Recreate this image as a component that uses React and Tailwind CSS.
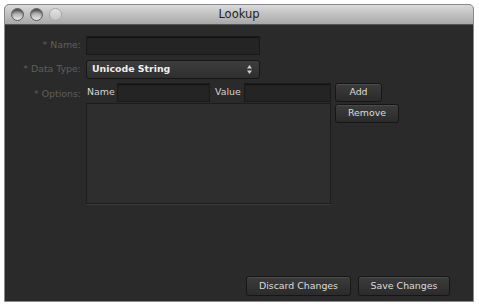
const btn =
  'flex items-center justify-center rounded-[3px] border border-[#161616] bg-gradient-to-b from-[#3c3c3c] to-[#2b2b2b] text-[9.4px] text-[#dcdcdc] shadow-[inset_0_1px_0_rgba(255,255,255,0.08)]';

const input = 'h-[19px] border border-[#1a1a1a] bg-[#242424] shadow-[inset_0_1px_1px_rgba(0,0,0,0.5)]';

function Light({ dim }) {
  return (
    <span
      className={`h-[13px] w-[13px] rounded-full border ${
        dim
          ? 'border-[#a8a8a8] bg-gradient-to-b from-[#e4e4e4] to-[#c4c4c4]'
          : 'border-[#5a5a5a] bg-gradient-to-b from-[#6e6e6e] via-[#b8b8b8] to-[#e8e8e8] shadow-[inset_0_2px_2px_rgba(0,0,0,0.35)]'
      }`}
    />
  );
}

export default function App() {
  return (
    <div
      className="h-[306px] w-[479px] bg-white pl-[4px] pr-[5px] pt-[4px] pb-[4px]"
      style={{ fontFamily: '"DejaVu Sans", "Liberation Sans", sans-serif' }}
    >
      <div className="flex h-full flex-col overflow-hidden rounded-t-[5px] border border-[#8a8a8a] bg-[#2a2a2a]">
        <div className="relative flex h-[20px] shrink-0 items-center border-b border-[#555] bg-gradient-to-b from-[#dadada] to-[#a8a8a8] px-[6px]">
          <div className="flex gap-[6px]">
            <Light />
            <Light />
            <Light dim />
          </div>
          <div className="absolute inset-0 flex items-center justify-center text-[11.5px] text-[#222]">Lookup</div>
        </div>

        <div className="relative flex-1 text-[9.4px]">
          <div className="flex items-center pt-[11px]">
            <div className="w-[76px] text-right text-[#5e5e5e]">* Name:</div>
            <div className={`${input} ml-[5px] w-[174px]`} />
          </div>

          <div className="mt-[5px] flex items-center">
            <div className="w-[76px] text-right text-[#5e5e5e]">* Data Type:</div>
            <div className="ml-[5px] flex h-[19px] w-[174px] items-center justify-between rounded-[3px] border border-[#161616] bg-gradient-to-b from-[#3e3e3e] to-[#2e2e2e] pl-[5px] pr-[7px] font-bold text-[#eee]">
              <span>Unicode String</span>
              <svg width="5" height="9" viewBox="0 0 5 9" className="fill-[#d0d0d0]">
                <path d="M2.5 0 L5 3.5 L0 3.5 Z" />
                <path d="M0 5.5 L5 5.5 L2.5 9 Z" />
              </svg>
            </div>
          </div>

          <div className="mt-[4px] flex">
            <div className="w-[76px] pt-[4px] text-right text-[#5e5e5e]">* Options:</div>
            <div className="ml-[5px] flex flex-col">
              <div className="flex items-center">
                <span className="ml-[1px] w-[30px] text-[#d4d4d4]">Name</span>
                <div className={`${input} w-[93px]`} />
                <span className="ml-[5px] w-[29px] text-[#d4d4d4]">Value</span>
                <div className={`${input} w-[87px]`} />
              </div>
              <div className="mt-[1px] h-[101px] w-[245px] border border-[#1c1c1c] bg-[#2e2e2e] shadow-[0_1px_0_rgba(255,255,255,0.08)]" />
            </div>
            <div className="ml-[4px] flex flex-col items-start gap-[2px]">
              <div className={`${btn} h-[19px] w-[47px]`}>Add</div>
              <div className={`${btn} h-[19px] w-[64px]`}>Remove</div>
            </div>
          </div>

          <div className="absolute bottom-[5px] right-[23px] flex gap-[7px]">
            <div className={`${btn} h-[20px] w-[105px]`}>Discard Changes</div>
            <div className={`${btn} h-[20px] w-[92px]`}>Save Changes</div>
          </div>
        </div>
      </div>
    </div>
  );
}
